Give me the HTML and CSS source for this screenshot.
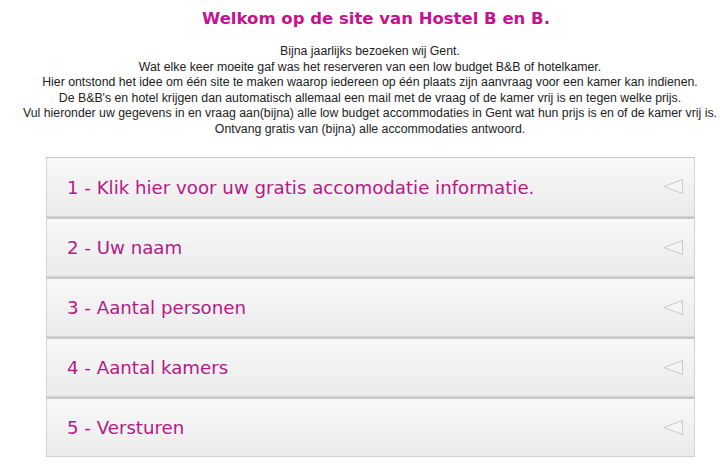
FILE: index.html
```html
<!DOCTYPE html>
<html>
<head>
<meta charset="utf-8">
<link rel="stylesheet" href="styles.css">
</head>
<body>
<div class="page">
  <h1 class="title">Welkom op de site van Hostel B en B.</h1>
  <p class="intro">Bijna jaarlijks bezoeken wij Gent.<br>
  Wat elke keer moeite gaf was het reserveren van een low budget B&amp;B of hotelkamer.<br>
  Hier ontstond het idee om één site te maken waarop iedereen op één plaats zijn aanvraag voor een kamer kan indienen.<br>
  De B&amp;B's en hotel krijgen dan automatisch allemaal een mail met de vraag of de kamer vrij is en tegen welke prijs.<br>
  Vul hieronder uw gegevens in en vraag aan(bijna) alle low budget accommodaties in Gent wat hun prijs is en of de kamer vrij is.<br>
  Ontvang gratis van (bijna) alle accommodaties antwoord.</p>
  <div class="accordion">
    <div class="item"><span>1 - Klik hier voor uw gratis accomodatie informatie.</span><svg class="arrow" width="21" height="16" viewBox="0 0 21 16"><polygon points="19.5,0.5 0.8,7.5 19.5,14.5" fill="#f4f4f4" stroke="#c9c9c9" stroke-width="1"/></svg></div>
    <div class="item"><span>2 - Uw naam</span><svg class="arrow" width="21" height="16" viewBox="0 0 21 16"><polygon points="19.5,0.5 0.8,7.5 19.5,14.5" fill="#f4f4f4" stroke="#c9c9c9" stroke-width="1"/></svg></div>
    <div class="item"><span>3 - Aantal personen</span><svg class="arrow" width="21" height="16" viewBox="0 0 21 16"><polygon points="19.5,0.5 0.8,7.5 19.5,14.5" fill="#f4f4f4" stroke="#c9c9c9" stroke-width="1"/></svg></div>
    <div class="item"><span>4 - Aantal kamers</span><svg class="arrow" width="21" height="16" viewBox="0 0 21 16"><polygon points="19.5,0.5 0.8,7.5 19.5,14.5" fill="#f4f4f4" stroke="#c9c9c9" stroke-width="1"/></svg></div>
    <div class="item"><span>5 - Versturen</span><svg class="arrow" width="21" height="16" viewBox="0 0 21 16"><polygon points="19.5,0.5 0.8,7.5 19.5,14.5" fill="#f4f4f4" stroke="#c9c9c9" stroke-width="1"/></svg></div>
  </div>
</div>
</body>
</html>
```
FILE: styles.css
```css
html, body {
  margin: 0;
  padding: 0;
  background: #ffffff;
}
.page {
  margin-left: 18px;
  width: 704px;
  padding-top: 8px;
}
.title {
  margin: 0;
  font-family: "DejaVu Sans", Verdana, sans-serif;
  font-weight: bold;
  font-size: 16.5px;
  line-height: 22px;
  color: #c6128e;
  text-align: center;
  padding-left: 12px;
}
.intro {
  margin: 14px 0 0 0;
  font-family: "Liberation Sans", Arial, sans-serif;
  font-size: 12.3px;
  line-height: 15.5px;
  color: #222;
  text-align: center;
}
.accordion {
  margin: 20px 0 0 28px;
  width: 649px;
}
.item {
  box-sizing: border-box;
  height: 60px;
  display: flex;
  align-items: center;
  justify-content: space-between;
  padding: 0 10px 0 20px;
  border: 1px solid #d3d3d3;
  border-top-color: #c4c4c4;
  background: linear-gradient(#f8f8f8, #ebebeb);
  font-family: "DejaVu Sans", Verdana, sans-serif;
  font-size: 18.2px;
  color: #b41a86;
}
.item + .item {
  border-top: 2px solid #c8c8c8;
}
.arrow {
  display: block;
  margin-right: 0;
}
```
